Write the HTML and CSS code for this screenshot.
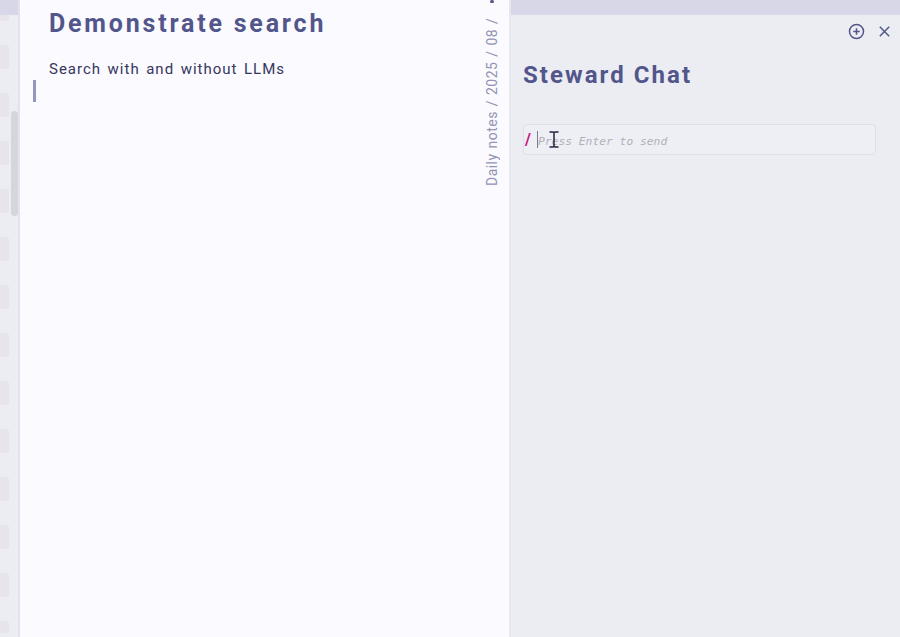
FILE: index.html
```html
<!DOCTYPE html>
<html lang="en">
<head>
<meta charset="utf-8">
<title>Steward Chat</title>
<link rel="stylesheet" href="styles.css">
</head>
<body>
<div class="app">
  <aside class="sidebar">
    <div class="tabs"></div>
    <div class="files">
      <i class="first"></i><i></i><i></i><i></i><i></i><i></i><i></i><i></i><i></i><i></i><i></i><i></i><i></i><i class="last"></i>
    </div>
    <div class="thumb"></div>
  </aside>
  <main class="note">
    <article>
      <h1 class="title">Demonstrate search</h1>
      <p class="text">Search with and without LLMs</p>
      <div class="caret"></div>
    </article>
    <div class="crumbs"><span class="path">Daily notes / 2025 / 08 /</span><span class="dot"></span></div>
  </main>
  <section class="chat">
    <div class="tabs"></div>
    <div class="actions">
      <svg width="17" height="17" viewBox="0 0 17 17"><circle cx="8.5" cy="8.5" r="7"/><path d="M8.5 5.3v6.4M5.3 8.5h6.4"/></svg>
      <svg width="11" height="11" viewBox="0 0 11 11"><path d="M.8.8l9.4 9.4M10.2.8L.8 10.2"/></svg>
    </div>
    <h1 class="heading">Steward Chat</h1>
    <div class="prompt">
      <span class="slash">/</span><span class="cursor"></span><span class="hint">Press Enter to send</span>
      <svg class="pointer" width="10" height="17" viewBox="0 0 10 17"><path d="M.5 1H4l1 .8L6 1h3.500M.5 16H4l1-.8 1 .8h3.500M5 1.500v14"/></svg>
    </div>
  </section>
</div>
</body>
</html>
```
FILE: styles.css
```css
* { box-sizing: border-box; }
body { margin: 0; overflow: hidden; font-family: Roboto, sans-serif; }
h1, p { margin: 0; font-size: inherit; white-space: nowrap; }
.app { display: flex; width: 900px; height: 637px; background: #fbfaff; }
.tabs { height: 15px; background: #d8d7e8; }
.sidebar { position: relative; width: 20px; background: #ebedf2; border-right: 2px solid #e2e2ec; overflow: hidden; }
.files { display: flex; flex-direction: column; gap: 24px; width: 9px; }
.files i { height: 24px; flex: none; background: #e7e4eb; border-radius: 0 2px 2px 0; }
.files .first { height: 6px; }
.files .last { height: 12px; }
.thumb { position: absolute; left: 10.500px; top: 111px; width: 7px; height: 105px; border-radius: 4px; background: #d5d6dc; }
.note { display: flex; justify-content: space-between; width: 489px; padding-left: 13px; }
.title, .heading { color: #52568a; font-weight: 700; font-size: 25px; line-height: 34px; }
.title { margin: 7px 0 0 16px; letter-spacing: 2.8px; }
.text { margin: 17px 0 0 16px; color: #35375d; font-size: 15px; font-weight: 400; line-height: 22px; letter-spacing: 1px; word-spacing: 1.800px; }
.caret { width: 2.500px; height: 22px; background: #9496bf; }
.crumbs { display: flex; flex-direction: row; align-items: center; writing-mode: vertical-rl; transform: rotate(180deg); width: 24px; height: 186px; margin-right: 5px; color: #9294b4; font-size: 14px; line-height: 24px; white-space: nowrap; }
.path { height: 169px; letter-spacing: .47px; word-spacing: 1px; }
.dot { flex: none; width: 4px; height: 3px; margin-top: 15px; border-radius: 2px; background: #52568a; }
.chat { width: 391px; background: #ecedf3; border-left: 2px solid #e7e7ee; }
.actions { display: flex; justify-content: flex-end; align-items: center; gap: 14px; height: 32px; padding-right: 10px; }
.actions svg { fill: none; stroke: #52568a; stroke-width: 1.5; }
.heading { margin: 11px 0 0 12px; font-size: 24px; letter-spacing: 2.050px; }
.prompt { position: relative; display: flex; align-items: center; width: 353px; height: 31px; margin: 32px 0 0 12px; padding-left: 1px; border: 1px solid #e0e1e8; border-radius: 4px; background: #eeeff5; }
.slash { width: 12px; color: #c4167d; font: 700 16px Roboto, sans-serif; }
.cursor { width: 1px; height: 17px; background: #777c94; }
.hint { margin-top: 3px; color: #afb1b8; font: italic 11.300px "DejaVu Sans Mono", monospace; white-space: nowrap; }
.pointer { position: absolute; left: 25px; top: 6px; fill: none; stroke: #20233b; stroke-width: 1.5; }
```
